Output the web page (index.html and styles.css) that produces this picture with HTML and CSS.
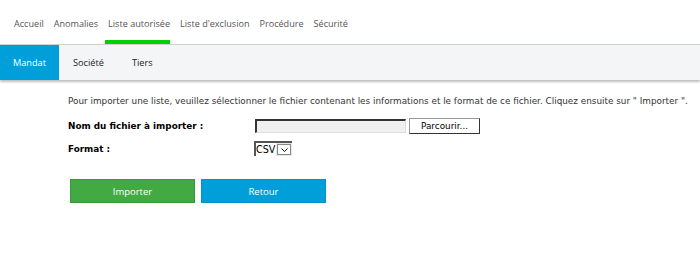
FILE: index.html
```html
<!DOCTYPE html>
<html lang="fr">
<head>
  <meta charset="UTF-8">
  <meta name="viewport" content="width=device-width, initial-scale=1.0">
  <title>Liste autorisée</title>
  <link rel="stylesheet" href="styles.css">
</head>
<body>

  <nav class="top-nav">
    <a href="#">Accueil</a>
    <a href="#">Anomalies</a>
    <a href="#" class="active">Liste autorisée</a>
    <a href="#">Liste d'exclusion</a>
    <a href="#">Procédure</a>
    <a href="#">Sécurité</a>
  </nav>

  <nav class="sub-nav">
    <a href="#" class="active">Mandat</a>
    <a href="#">Société</a>
    <a href="#">Tiers</a>
  </nav>

  <div class="content">
    <p class="intro">Pour importer une liste, veuillez sélectionner le fichier contenant les informations et le format de ce fichier. Cliquez ensuite sur " Importer ".</p>

    <table class="form">
      <tr>
        <th>Nom du fichier à importer :</th>
        <td>
          <span class="file-box"></span><button class="browse">Parcourir...</button>
        </td>
      </tr>
      <tr>
        <th>Format :</th>
        <td>
          <span class="select"><span class="select-value">CSV</span><span class="select-arrow">
            <svg width="7" height="4" viewBox="0 0 7 4"><path d="M0.5 0.5 L3.5 3.5 L6.5 0.5" fill="none" stroke="#000" stroke-width="1"/></svg>
          </span></span>
        </td>
      </tr>
    </table>

    <div class="actions">
      <button class="btn btn-green">Importer</button>
      <button class="btn btn-blue">Retour</button>
    </div>
  </div>

</body>
</html>
```

FILE: styles.css
```css
body {
  margin: 0;
  background: #fff;
  font-family: "Open Sans", sans-serif;
}

.top-nav {
  display: flex;
  gap: 10px;
  padding: 0 0 0 14px;
  height: 45px;
  border-bottom: 1px solid #cfcfcf;
  box-sizing: border-box;
}

.top-nav a {
  display: block;
  padding-top: 17px;
  font-size: 9.1px;
  color: #555;
  text-decoration: none;
  border-bottom: 4px solid transparent;
}

.top-nav a.active {
  border-bottom-color: #00d000;
  margin-left: -3px;
  padding-left: 3px;
}

.sub-nav {
  display: flex;
  height: 35px;
  background: #f4f5f7;
  box-shadow: 0 2px 2px rgba(0, 0, 0, 0.25);
}

.sub-nav a {
  display: flex;
  align-items: center;
  padding: 0 14px;
  font-size: 9.2px;
  color: #222;
  text-decoration: none;
}

.sub-nav a.active {
  justify-content: center;
  width: 59px;
  padding: 0;
  background: #009fda;
  color: #fff;
}

.content {
  padding: 16px 0 0 68px;
  font-family: "DejaVu Sans", Verdana, sans-serif;
  font-size: 8.85px;
  color: #000;
}

.intro {
  margin: 0 0 8px;
  color: #333;
}

.form {
  border-collapse: collapse;
}

.form th {
  text-align: left;
  font-weight: bold;
  width: 187px;
  padding: 0;
  height: 23px;
}

.form td {
  padding: 0;
}

.file-box {
  display: inline-block;
  vertical-align: middle;
  width: 148px;
  height: 11px;
  background: #f0f0f0;
  border-top: 2px solid #333;
  border-left: 2px solid #333;
  border-right: 1px solid #ddd;
  border-bottom: 1px solid #ddd;
}

.browse {
  vertical-align: middle;
  margin-left: 3px;
  width: 71px;
  height: 16px;
  padding: 0;
  font-family: "DejaVu Sans", Verdana, sans-serif;
  font-size: 8.85px;
  background: #fff;
  border: 1px solid #999;
  border-right-color: #333;
  border-bottom-color: #333;
}

.select {
  display: inline-flex;
  vertical-align: middle;
  height: 15px;
  margin-left: -1px;
  border-top: 2px solid #555;
  border-left: 2px solid #555;
  background: #e8e8e8;
  box-sizing: border-box;
}

.select-value {
  background: #fff;
  font-size: 9.6px;
  line-height: 13px;
  padding: 0 1px 0 0;
}

.select-arrow {
  display: flex;
  align-items: center;
  justify-content: center;
  width: 12px;
  margin: 1px;
  background: #fff;
  border: 1px solid #888;
}

.actions {
  display: flex;
  gap: 6px;
  margin: 19px 0 0 2px;
}

.btn {
  width: 125px;
  height: 24px;
  font-family: "Open Sans", sans-serif;
  font-size: 9.5px;
  color: #fff;
  cursor: pointer;
}

.btn-green {
  background: #43a943;
  border: 1px solid #379a37;
}

.btn-blue {
  background: #009fda;
  border: 1px solid #0a8fc6;
}
```
